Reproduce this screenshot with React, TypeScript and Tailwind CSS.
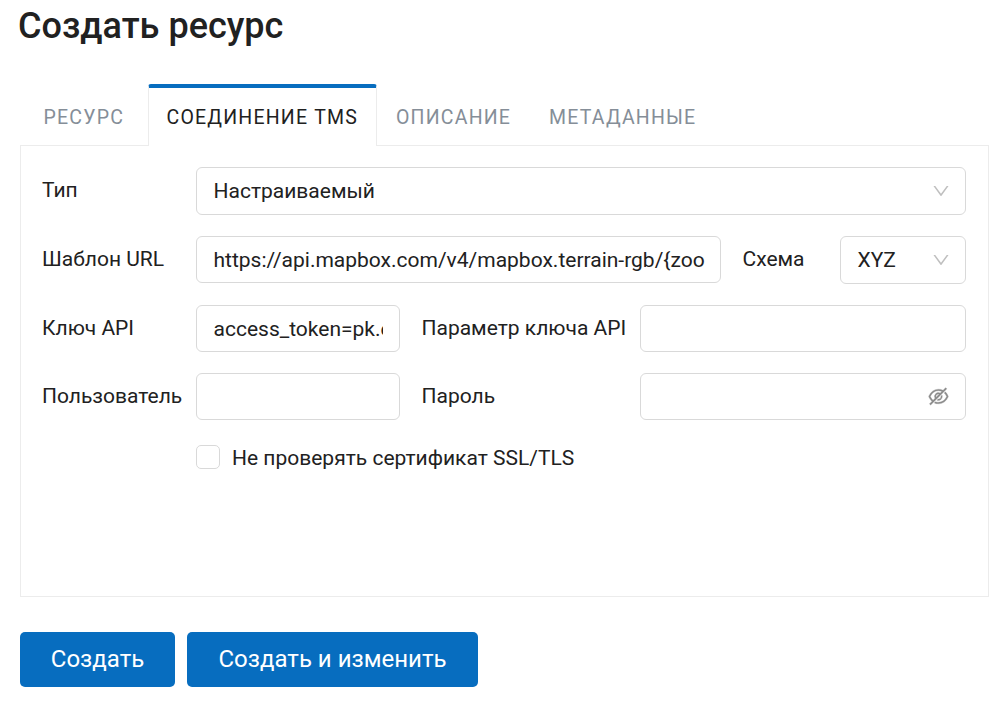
import type { ReactNode } from "react";
import { AiOutlineDown, AiOutlineEyeInvisible } from "react-icons/ai";

const tabs = [
  { label: "Ресурс", width: "w-[128px] pl-[23.5px]" },
  { label: "Соединение TMS", width: "w-[229px] pl-[17.5px]", active: true },
  { label: "Описание", width: "w-[153px] pl-[19px]" },
  { label: "Метаданные", width: "w-[190px] pl-[19px]" },
];

function Label({ children, className }: { children: ReactNode; className: string }) {
  return (
    <div className={`flex h-[47px] shrink-0 items-center whitespace-nowrap pb-[1px] ${className}`}>
      {children}
    </div>
  );
}

function Field({ children, className }: { children?: ReactNode; className: string }) {
  return (
    <div
      className={`flex shrink-0 items-center rounded-[6px] border border-[#d9d9d9] pl-[16.5px] pr-[16px] ${className}`}
    >
      {children}
    </div>
  );
}

export default function App() {
  return (
    <main className="h-[701px] w-[1005px] overflow-hidden bg-white pl-[20px] font-[Roboto,sans-serif] text-[21px] leading-[30px] text-[#212121]">
      <h1 className="h-[84px] pt-[4px] text-[36px] font-medium leading-[44px]">
        <span className="-ml-[2px]">Создать ресурс</span>
      </h1>

      <div className="flex h-[62px] w-[969px]">
        {tabs.map((tab) => (
          <div
            key={tab.label}
            className={`flex shrink-0 items-center whitespace-nowrap text-[19.5px] uppercase tracking-[1.2px] ${tab.width} ${
              tab.active
                ? "rounded-t-[3px] border-x border-t-4 border-x-[#ececec] border-t-[#076dbf] pt-[2px]"
                : "border-b border-b-[#ececec] pt-[7px] text-[#858e98]"
            }`}
          >
            {tab.label}
          </div>
        ))}
        <div className="flex-1 border-b border-[#ececec]" />
      </div>

      <section className="h-[451px] w-[969px] border border-t-0 border-[#ececec] pl-[21px] pt-[21px]">
        <div className="flex h-[69px]">
          <Label className="w-[154px]">Тип</Label>
          <Field className="h-[48px] w-[770px]">
            <span className="flex-1">Настраиваемый</span>
            <AiOutlineDown className="-mr-[2px] size-[20px] text-[#bfbfbf]" />
          </Field>
        </div>
        <div className="flex h-[69px]">
          <Label className="w-[154px]">Шаблон URL</Label>
          <Field className="h-[47px] w-[525px]">
            <span className="whitespace-nowrap">
              https://api.mapbox.com/v4/mapbox.terrain-rgb/{"{"}zoo
            </span>
          </Field>
          <Label className="w-[119px] pl-[21.5px]">Схема</Label>
          <Field className="h-[48px] w-[126px]">
            <span className="flex-1">XYZ</span>
            <AiOutlineDown className="-mr-[2px] size-[20px] text-[#bfbfbf]" />
          </Field>
        </div>
        <div className="flex h-[68px]">
          <Label className="w-[154px]">Ключ API</Label>
          <Field className="h-[47px] w-[204px]">
            <span className="overflow-hidden whitespace-nowrap">access_token=pk.e</span>
          </Field>
          <Label className="w-[240px] pl-[21.5px]">Параметр ключа API</Label>
          <Field className="h-[47px] w-[326px]" />
        </div>
        <div className="flex h-[70px]">
          <Label className="w-[154px]">Пользователь</Label>
          <Field className="h-[47px] w-[204px]" />
          <Label className="w-[240px] pl-[21.5px]">Пароль</Label>
          <Field className="h-[47px] w-[326px] justify-end">
            <AiOutlineEyeInvisible
              className="-mr-[1px] size-[23px] text-[#8c8c8c]"
              stroke="currentColor"
              strokeWidth={12}
            />
          </Field>
        </div>
        <div className="flex items-center gap-[12px] pl-[154px]">
          <div className="mb-[2px] size-[24px] rounded-[5px] border border-[#d9d9d9]" />
          <span className="whitespace-nowrap">Не проверять сертификат SSL/TLS</span>
        </div>
      </section>

      <div className="flex gap-[12px] pt-[35px]">
        <button className="h-[55px] w-[155px] whitespace-nowrap rounded-[5px] bg-[#076dbf] pb-[2px] text-[24px] text-white">
          Создать
        </button>
        <button className="h-[55px] w-[291px] whitespace-nowrap rounded-[5px] bg-[#076dbf] pb-[2px] text-[24px] text-white">
          Создать и изменить
        </button>
      </div>
    </main>
  );
}
